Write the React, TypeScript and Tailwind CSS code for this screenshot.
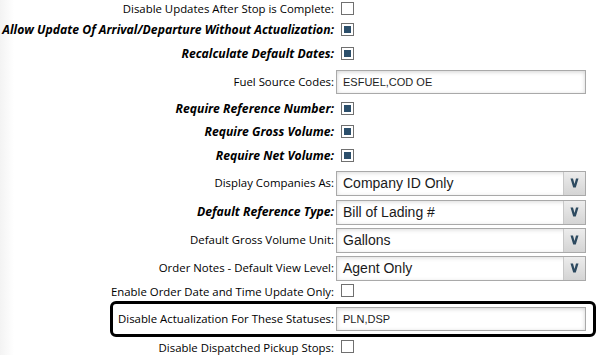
import React from 'react';

type Row =
  | { kind: 'check'; label: string; bold?: boolean; checked: boolean; h: string }
  | { kind: 'input'; label: string; bold?: boolean; value: string; h: string }
  | { kind: 'select'; label: string; bold?: boolean; value: string; h: string };

const rowsTop: Row[] = [
  { kind: 'check', label: 'Disable Updates After Stop is Complete:', checked: false, h: 'h-[18px]' },
  { kind: 'check', label: 'Allow Update Of Arrival/Departure Without Actualization:', bold: true, checked: true, h: 'h-[24px]' },
  { kind: 'check', label: 'Recalculate Default Dates:', bold: true, checked: true, h: 'h-[24px]' },
  { kind: 'input', label: 'Fuel Source Codes:', value: 'ESFUEL,COD OE', h: 'h-[32px]' },
  { kind: 'check', label: 'Require Reference Number:', bold: true, checked: true, h: 'h-[22px]' },
  { kind: 'check', label: 'Require Gross Volume:', bold: true, checked: true, h: 'h-[24px]' },
  { kind: 'check', label: 'Require Net Volume:', bold: true, checked: true, h: 'h-[24px]' },
  { kind: 'select', label: 'Display Companies As:', value: 'Company ID Only', h: 'h-[30px]' },
  { kind: 'select', label: 'Default Reference Type:', bold: true, value: 'Bill of Lading #', h: 'h-[28px]' },
  { kind: 'select', label: 'Default Gross Volume Unit:', value: 'Gallons', h: 'h-[28px]' },
  { kind: 'select', label: 'Order Notes - Default View Level:', value: 'Agent Only', h: 'h-[28px]' },
  { kind: 'check', label: 'Enable Order Date and Time Update Only:', checked: false, h: 'h-[19px]' },
];

const Checkbox = ({ checked }: { checked: boolean }) => (
  <div className="ml-[5px] w-[13px] h-[13px] border border-[#707070] bg-white flex items-center justify-center -mt-[2px]">
    {checked && <div className="w-[7px] h-[7px] bg-[#2c4f6b]" />}
  </div>
);

const TextBox = ({ value }: { value: string }) => (
  <div className="w-[250px] h-[24px] shrink-0 border border-[#a9a9a9] bg-white shadow-[inset_0_1px_4px_rgba(0,0,0,0.18)] flex items-center pl-[6px] text-[11px] text-[#1e1e1e] font-['Liberation_Sans',Arial,sans-serif]">
    {value}
  </div>
);

const Select = ({ value }: { value: string }) => (
  <div className="w-[250px] h-[25px] border border-[#a9a9a9] bg-white shadow-[inset_0_1px_4px_rgba(0,0,0,0.15)] flex items-stretch">
    <div className="flex-1 flex items-center pl-[6px] text-[14px] text-[#1a1a1a] font-['Liberation_Sans',Arial,sans-serif]">
      {value}
    </div>
    <div className="w-[22px] bg-gradient-to-b from-[#ececec] to-[#d4d4d4] border-l border-[#c8c8c8] flex items-center justify-center">
      <svg width="9" height="10" viewBox="0 0 9 10">
        <path d="M0.5 0.5 L3 0.5 L4.5 6 L6 0.5 L8.5 0.5 L5.8 9.5 L3.2 9.5 Z" fill="#2d4a60" />
      </svg>
    </div>
  </div>
);

const Label = ({ text, bold, w }: { text: string; bold?: boolean; w: string }) => (
  <div
    className={`${w} shrink-0 flex justify-end whitespace-nowrap pr-[2px] text-black ${
      bold ? 'font-bold italic text-[12.2px]' : 'text-[11.4px]'
    }`}
  >
    {text}
  </div>
);

const Control = ({ row }: { row: Row }) =>
  row.kind === 'check' ? (
    <Checkbox checked={row.checked} />
  ) : row.kind === 'input' ? (
    <TextBox value={row.value} />
  ) : (
    <Select value={row.value} />
  );

export default function App() {
  return (
    <div className="w-[600px] h-[355px] overflow-hidden bg-[linear-gradient(to_right,#f3f3f3,#ffffff_14px)] font-['Open_Sans','Noto_Sans',sans-serif]">
      {rowsTop.map((r, i) => (
        <div key={i} className={`flex items-center ${r.h}`}>
          <Label text={r.label} bold={r.bold} w="w-[336px]" />
          <Control row={r} />
        </div>
      ))}

      {/* highlighted row */}
      <div className="ml-[110px] w-[486px] h-[36px] border-[3px] border-black rounded-[6px] flex items-center">
        <Label text="Disable Actualization For These Statuses:" w="w-[223px]" />
        <TextBox value="PLN,DSP" />
      </div>

      <div className="flex items-center h-[21px]">
        <Label text="Disable Dispatched Pickup Stops:" w="w-[336px]" />
        <Checkbox checked={false} />
      </div>
    </div>
  );
}
